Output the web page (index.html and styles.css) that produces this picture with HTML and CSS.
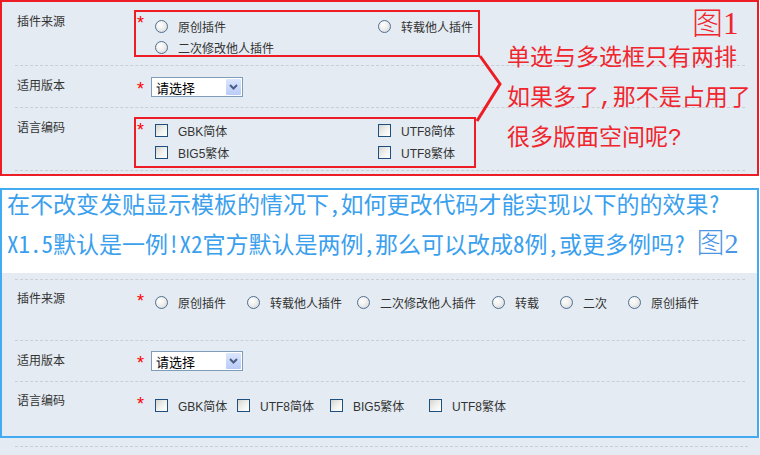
FILE: index.html
```html
<!DOCTYPE html>
<html lang="zh-CN">
<head>
<meta charset="utf-8">
<title>插件发布表单</title>
<link rel="stylesheet" href="styles.css">
</head>
<body>
<section class="panel panel-red">
  <div class="row s1-a">
    <div class="label">插件来源</div>
    <div class="boxed box-radio">
      <span class="star">*</span>
      <div class="grid2 rows21">
        <label class="opt"><span class="radio"></span>原创插件</label>
        <label class="opt"><span class="radio"></span>转载他人插件</label>
        <label class="opt"><span class="radio"></span>二次修改他人插件</label>
      </div>
    </div>
  </div>
  <div class="row s1-b">
    <div class="label">适用版本</div>
    <div class="field">
      <span class="star tight">*</span>
      <div class="select"><span>请选择</span><span class="select-btn"><svg width="9" height="6" viewBox="0 0 9 6"><polyline points="1,1 4.5,4.5 8,1" fill="none" stroke="#4a5f86" stroke-width="2"/></svg></span></div>
    </div>
  </div>
  <div class="row s1-c">
    <div class="label">语言编码</div>
    <div class="boxed box-check">
      <span class="star">*</span>
      <div class="grid2 rows22">
        <label class="opt"><span class="check"></span>GBK简体</label>
        <label class="opt"><span class="check"></span>UTF8简体</label>
        <label class="opt"><span class="check"></span>BIG5繁体</label>
        <label class="opt"><span class="check"></span>UTF8繁体</label>
      </div>
    </div>
  </div>
  <svg class="arrow" width="759" height="176" viewBox="0 0 759 176"><polyline points="480,56 500,84 477,121" fill="none" stroke="#ee1c25" stroke-width="3"/></svg>
  <div class="note">
    <span class="note-line">单选与多选框只有两排</span>
    <span class="note-line">如果多了,那不是占用了</span>
    <span class="note-line">很多版面空间呢?</span>
  </div>
  <div class="fig1">图1</div>
</section>

<section class="panel panel-blue">
  <div class="question">
    <p class="q1">在不改变发贴显示模板的情况下,如何更改代码才能实现以下的的效果?</p>
    <p class="q2">X1.5默认是一例!X2官方默认是两例,那么可以改成8例,或更多例吗?<span class="fig2">图2</span></p>
  </div>
  <div class="form">
    <div class="form-top"></div>
    <div class="row s2-a">
      <div class="label">插件来源</div>
      <div class="field">
        <span class="star">*</span>
        <div class="line radios6">
          <label class="opt"><span class="radio"></span>原创插件</label>
          <label class="opt"><span class="radio"></span>转载他人插件</label>
          <label class="opt"><span class="radio"></span>二次修改他人插件</label>
          <label class="opt"><span class="radio"></span>转载</label>
          <label class="opt"><span class="radio"></span>二次</label>
          <label class="opt"><span class="radio"></span>原创插件</label>
        </div>
      </div>
    </div>
    <div class="row s2-b">
      <div class="label">适用版本</div>
      <div class="field">
        <span class="star tight">*</span>
        <div class="select"><span>请选择</span><span class="select-btn"><svg width="9" height="6" viewBox="0 0 9 6"><polyline points="1,1 4.5,4.5 8,1" fill="none" stroke="#4a5f86" stroke-width="2"/></svg></span></div>
      </div>
    </div>
    <div class="row s2-c last">
      <div class="label">语言编码</div>
      <div class="field">
        <span class="star">*</span>
        <div class="line checks4">
          <label class="opt"><span class="check"></span>GBK简体</label>
          <label class="opt"><span class="check"></span>UTF8简体</label>
          <label class="opt"><span class="check"></span>BIG5繁体</label>
          <label class="opt"><span class="check"></span>UTF8繁体</label>
        </div>
      </div>
    </div>
  </div>
</section>

<div class="tail"><div class="tail-line"></div></div>
</body>
</html>
```

FILE: styles.css
```css
html, body {
  margin: 0;
  padding: 0;
}
body {
  width: 760px;
  height: 455px;
  overflow: hidden;
  background: #fff;
  font-family: "Liberation Sans", "Noto Sans CJK SC", sans-serif;
  font-size: 12px;
  color: #333;
}

.panel {
  width: 759px;
  box-sizing: border-box;
  position: relative;
}
.panel-red {
  height: 176px;
  border: 2px solid #ee1c25;
  background: #e4ebf2;
}
.panel-blue {
  height: 250px;
  margin-top: 12px;
  border: 2px solid #42abf2;
  background: #fff;
}

/* rows */
.row {
  display: flex;
  align-items: flex-start;
  margin: 0 12px 0 13px;
  border-bottom: 1px dashed #cbcfd3;
  box-sizing: content-box;
}
.row.last {
  border-bottom: none;
}
.label {
  width: 119px;
  box-sizing: border-box;
  padding-left: 2px;
  line-height: 20px;
  flex: none;
}
.field {
  display: flex;
  align-items: flex-start;
  padding-left: 3px;
}
.star {
  display: block;
  width: 18px;
  flex: none;
  font-family: "Liberation Sans", sans-serif;
  font-size: 18px;
  line-height: 18px;
  color: #ff0000;
}
.star.tight {
  width: 14px;
}

/* section 1 rows */
.s1-a { height: 63px; }
.s1-a .label { margin-top: 10px; }
.s1-b { height: 41px; }
.s1-b .label { margin-top: 10px; }
.s1-b .field { margin-top: 11px; }
.s1-b .star { margin-top: 3px; }
.s1-c { height: 62px; }
.s1-c .label { margin-top: 10px; }

.boxed {
  display: flex;
  align-items: flex-start;
  box-sizing: border-box;
  border: 2px solid #ee1c25;
}
.boxed .star {
  padding-left: 1px;
  width: 19px;
  box-sizing: border-box;
  margin-top: 2px;
}
.box-radio {
  width: 346px;
  height: 47px;
  margin-top: 8px;
}
.box-check {
  width: 342px;
  height: 51px;
  margin-top: 9px;
}
.grid2 {
  display: grid;
  grid-template-columns: 223px auto;
}
.rows21 {
  grid-auto-rows: 21px;
  padding-top: 4px;
}
.rows22 {
  grid-auto-rows: 22px;
}

.opt {
  display: flex;
  align-items: center;
  white-space: nowrap;
  height: 100%;
}
.radio {
  width: 13px;
  height: 13px;
  box-sizing: border-box;
  border-radius: 50%;
  border: 1px solid #4f6f93;
  background: radial-gradient(circle at 38% 35%, #ffffff 0%, #f1f1ef 40%, #cfd2d6 100%);
  margin-right: 10px;
  flex: none;
}
.check {
  width: 13px;
  height: 13px;
  box-sizing: border-box;
  border: 1px solid #1e4f7e;
  background: linear-gradient(135deg, #d6d6d0 0%, #f4f4f2 60%, #ffffff 100%);
  margin-right: 10px;
  flex: none;
}

/* select */
.select {
  width: 92px;
  height: 20px;
  box-sizing: border-box;
  border: 1px solid #7f9db9;
  background: #fff;
  display: flex;
  align-items: center;
  justify-content: space-between;
  padding-left: 4px;
  color: #000;
  font-size: 13px;
}
.select-btn {
  width: 15px;
  height: 16px;
  margin-right: 1px;
  border-radius: 1px;
  background: linear-gradient(#dce6fd, #b9cbf8);
  display: flex;
  align-items: center;
  justify-content: center;
}

/* annotations over section 1 */
.arrow {
  position: absolute;
  left: -2px;
  top: -2px;
  pointer-events: none;
}
.note {
  position: absolute;
  left: 505px;
  top: 44px;
  display: flex;
  flex-direction: column;
  gap: 14px;
  font-family: "Liberation Mono", "Noto Sans Mono CJK SC", "Noto Sans CJK SC", monospace;
  font-size: 23px;
  line-height: 26px;
  color: #f0252d;
  white-space: nowrap;
}
.fig1 {
  position: absolute;
  left: 690px;
  top: 7px;
  font-family: "Liberation Serif", "Noto Sans CJK SC", serif;
  font-weight: 300;
  font-size: 31px;
  line-height: 30px;
  color: #f0252d;
}

/* section 2 */
.question {
  height: 83px;
  font-family: "Noto Sans Mono CJK SC", "Liberation Mono", "Noto Sans CJK SC", monospace;
  font-size: 23px;
  line-height: 26px;
  color: #3aa0ee;
  padding-left: 5px;
  box-sizing: border-box;
}
.question p {
  margin: 0;
  white-space: nowrap;
}
.q2 {
  margin-top: 14px !important;
}
.fig2 {
  font-family: "Liberation Serif", "Noto Sans CJK SC", serif;
  font-weight: 300;
  font-size: 28px;
  color: #4b95e6;
  margin-left: 11px;
}
.form {
  height: 163px;
  background: #e4ebf2;
  padding-top: 6px;
  box-sizing: border-box;
}
.form-top {
  margin: 0 12px 0 13px;
  border-top: 1px dashed #cbcfd3;
}
.s2-a { height: 60px; }
.s2-a .label { margin-top: 9px; }
.s2-a .field { margin-top: 12px; }
.s2-b { height: 40px; }
.s2-b .label { margin-top: 10px; }
.s2-b .field { margin-top: 10px; }
.s2-b .star { margin-top: 3px; }
.s2-c { height: 52px; }
.s2-c .label { margin-top: 9px; }
.s2-c .field { margin-top: 13px; }

.line {
  display: grid;
  grid-auto-rows: 20px;
}
.radios6 {
  grid-template-columns: 92px 110px 135px 68px 68px auto;
}
.checks4 {
  grid-template-columns: 82px 93px 99px auto;
}

.tail {
  height: 17px;
  background: #e4ebf2;
  padding-top: 8px;
  box-sizing: border-box;
}
.tail-line {
  margin: 0 12px 0 15px;
  border-top: 1px dashed #cbcfd3;
}
```
